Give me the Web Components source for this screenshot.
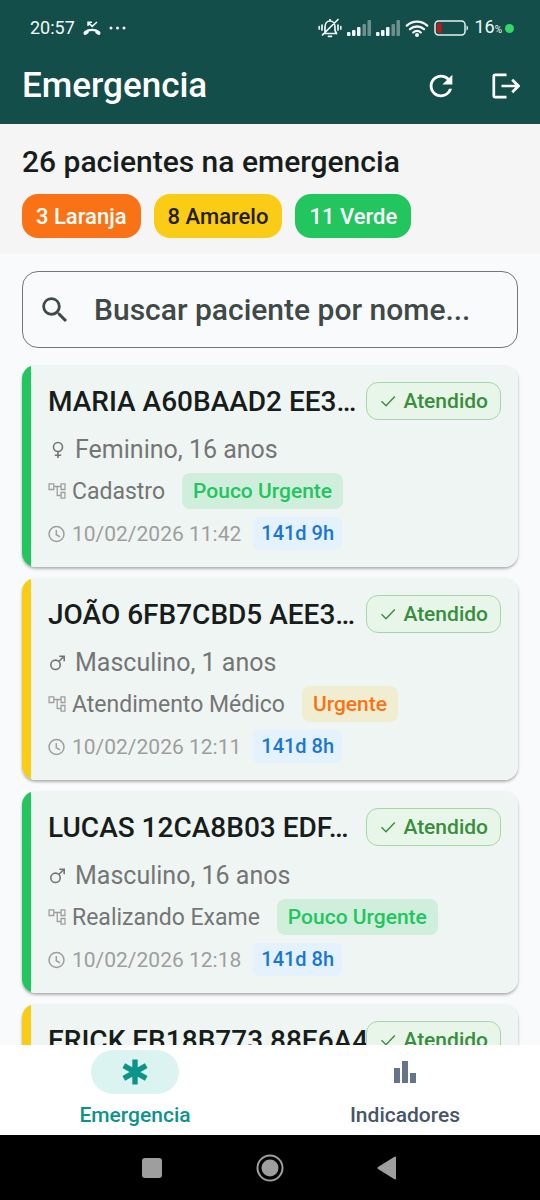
<!DOCTYPE html>
<html lang="pt-BR">
<head>
<meta charset="utf-8">
<meta name="viewport" content="width=device-width, initial-scale=1">
<title>Emergencia</title>
<style>
  html, body { margin: 0; height: 100%; }
  body { font-family: Roboto, "Liberation Sans", sans-serif; background: #f8fafc; color: #171d1b; }
</style>
</head>
<body>
<emergency-app></emergency-app>

<script>
const define = (name, html, setup) => {
  const template = document.createElement('template');
  template.innerHTML = html;
  customElements.define(name, class extends HTMLElement {
    constructor() {
      super();
      this.attachShadow({ mode: 'open' }).append(template.content.cloneNode(true));
    }
    connectedCallback() { if (setup) setup(this, this.shadowRoot); }
  });
};

/* Icons: [viewBox, width, height, markup] */
const ICONS = {
  missed: ['0 0 18 15', 18, 15, '<path d="M1 13.5c-.8-1-.6-2.4.4-3.200C5.500 7 12.500 7 16.600 10.300c1 .8 1.200 2.200.4 3.200-.5.6-1.300.7-2 .3l-2-1.200c-.5-.3-.7-.7-.7-1.300v-.9c-2-.7-4.600-.7-6.600 0v.9c0 .6-.2 1-.7 1.300l-2 1.200c-.7.4-1.500.3-2-.3z" fill="currentColor"/><path d="M5 5V1.200h4M5.200 1.400l4 4L14 1" fill="none" stroke="currentColor" stroke-width="1.500"/>'],
  more: ['0 0 17 4', 17, 4, '<g fill="currentColor"><circle cx="2" cy="2" r="1.500"/><circle cx="8.500" cy="2" r="1.500"/><circle cx="15" cy="2" r="1.500"/></g>'],
  bell: ['0 0 24 20', 24, 20, '<g fill="none" stroke="currentColor" stroke-width="1.700" stroke-linecap="round"><path d="M5.500 15.500h13M7 15V9c0-3.500 2-6 5-6s5 2.500 5 6v3.500l1.500 3M12 1.500V3M10.500 18.300h3M20 1.500L4.500 17M4 7v5M1.200 8.500v2.500M20 7v5M22.800 8.500v2.500"/></g>'],
  signal: ['0 0 24 16', 24, 16, '<g fill="currentColor"><rect x="0" y="12" width="3.500" height="4" rx="1"/><rect x="5" y="10" width="3.500" height="6" rx="1"/><rect x="10" y="7" width="3.500" height="9" rx="1"/><g opacity=".4"><rect x="15.500" y="4" width="3.500" height="12" rx="1"/><rect x="20.500" y="0" width="3.500" height="16" rx="1"/></g></g>'],
  wifi: ['0 0 24 17', 24, 17, '<g fill="none" stroke="currentColor" stroke-width="2.300" stroke-linecap="round"><path d="M1.800 5.600C7.500.2 16.500.2 22.200 5.600M5 9.200c4-3.600 10-3.600 14 0M8.200 12.500c2.200-2 5.400-2 7.600 0"/></g><circle cx="12" cy="15" r="2" fill="currentColor"/>'],
  battery: ['0 0 35 16', 35, 16, '<rect x="1" y="1" width="30" height="14" rx="3.500" fill="none" stroke="#e4f1ef" stroke-width="1.500"/><path d="M32.500 5.500c2 .5 2 4.500 0 5z" fill="#e4f1ef"/><rect x="3" y="3" width="4.500" height="10" rx="1.500" fill="#c4161c"/>'],
  refresh: ['0 0 24 24', 34, 34, '<path fill="currentColor" d="M17.650 6.350A7.958 7.958 0 0 0 12 4c-4.420 0-7.990 3.580-7.990 8s3.570 8 7.990 8c3.730 0 6.840-2.550 7.730-6h-2.080A5.990 5.990 0 0 1 12 18c-3.310 0-6-2.690-6-6s2.690-6 6-6c1.660 0 3.140.690 4.220 1.780L13 11h7V4z"/>'],
  logout: ['0 0 28 26', 28, 26, '<path d="M14.500 1.800H3.200Q1.800 1.800 1.800 3.200V22.800Q1.800 24.200 3.200 24.200H14.500M9.500 13H26.500M20.200 6.800L26.500 13 20.200 19.200" fill="none" stroke="currentColor" stroke-width="2.700"/>'],
  search: ['0 0 24 24', 34, 34, '<path fill="currentColor" d="M15.500 14h-.79l-.28-.27A6.471 6.471 0 0 0 16 9.500 6.500 6.500 0 1 0 9.500 16c1.610 0 3.090-.59 4.230-1.570l.27.28v.79l5 4.990L20.490 19l-4.990-5zm-6 0C7.010 14 5 11.990 5 9.500S7.010 5 9.500 5 14 7.010 14 9.500 11.990 14 9.500 14z"/>'],
  female: ['0 0 18 18', 18, 18, '<g fill="none" stroke="currentColor" stroke-width="1.600"><circle cx="10" cy="6" r="4.500"/><path d="M10 10.500V17M6.800 14.200h6.400"/></g>'],
  male: ['0 0 18 18', 18, 18, '<g fill="none" stroke="currentColor" stroke-width="1.600"><circle cx="7.500" cy="10.800" r="4.700"/><path d="M10.800 7.500L16 2.300M11.300 2.300H16.200V7.200"/></g>'],
  tree: ['2 1.500 20 21', 18, 18, '<path fill="currentColor" d="M22 11V3h-6v3H9V3H2v8h7V7.500h2.500V18H16v3h6v-8h-6v3.500h-3V7.500h3V11zM7.500 9.500h-4v-5h4zm10 5h3v5h-3zm0-10h3v5h-3z"/>'],
  clock: ['0 0 18 18', 18, 18, '<g fill="none" stroke="currentColor" stroke-width="1.500"><circle cx="8.500" cy="9" r="7.500"/><path d="M8.300 5v4.700l3.800 2.100"/></g>'],
  check: ['0 0 16 14', 16, 14, '<path d="M1.500 7.200L6 11.700 14.800 2.500" fill="none" stroke="currentColor" stroke-width="1.400"/>'],
  asterisk: ['0 0 26 26', 26, 26, '<path d="M13 .5V25.500M1.800 6.700L24.200 19.300M1.800 19.300L24.200 6.700" stroke="currentColor" stroke-width="5.400"/>'],
  bars: ['0 0 26 26', 26, 26, '<path d="M2 9h6v15H2zM10 2h6v22h-6zM18 14h6v10h-6z" fill="currentColor"/>'],
  square: ['0 0 28 28', 28, 28, '<rect x="4" y="4" width="20" height="20" rx="3" fill="currentColor"/>'],
  circle: ['0 0 28 28', 28, 28, '<circle cx="14" cy="14" r="12.500" fill="none" stroke="currentColor" stroke-width="2"/><circle cx="14" cy="14" r="8.500" fill="currentColor"/>'],
  triangle: ['0 0 28 28', 28, 28, '<path d="M22 3.500v21q0 1.500-1.500.7L4 15q-1.400-1 0-2L20.500 2.800q1.500-.8 1.500.7z" fill="currentColor"/>']
};

define('ui-icon', '<style>:host{display:inline-flex;flex:none}svg{display:block}</style><span></span>', (host, root) => {
  const [box, w, h, body] = ICONS[host.getAttribute('name')];
  root.querySelector('span').innerHTML = `<svg viewBox="${box}" width="${w}" height="${h}" aria-hidden="true">${body}</svg>`;
});

define('status-bar', `
<style>
  :host { display: flex; align-items: center; justify-content: space-between; height: 56px; padding: 0 26px 0 30px; background: #134e4a; color: #f1f8f7; font-size: 18px; line-height: 24px; box-sizing: border-box; }
  div { display: flex; align-items: center; gap: 8px; }
  .right { gap: 5px; }
  .level { display: flex; align-items: baseline; }
  small { font-size: 10px; }
  i { width: 9px; height: 9px; border-radius: 50%; background: #34d765; }
  .pair { gap: 3px; }
</style>
<div><span>20:57</span><ui-icon name="missed"></ui-icon><ui-icon name="more"></ui-icon></div>
<div class="right">
  <ui-icon name="bell"></ui-icon><ui-icon name="signal"></ui-icon><ui-icon name="signal"></ui-icon><ui-icon name="wifi"></ui-icon><ui-icon name="battery"></ui-icon>
  <div class="pair"><span class="level"><span>16</span><small>%</small></span><i></i></div>
</div>`);

define('app-header', `
<style>
  :host { display: flex; align-items: center; height: 68px; padding: 0 20px 8px 22px; background: #134e4a; color: #fff; box-sizing: border-box; }
  h1 { flex: 1; margin: 0; font-size: 35px; line-height: 44px; font-weight: 500; }
  .actions { display: flex; align-items: center; gap: 34px; }
  button { display: flex; padding: 0; border: 0; background: none; color: inherit; }
</style>
<h1><slot></slot></h1>
<div class="actions">
  <button type="button" aria-label="Atualizar"><ui-icon name="refresh"></ui-icon></button>
  <button type="button" aria-label="Sair"><ui-icon name="logout"></ui-icon></button>
</div>`);

define('triage-chip', `
<style>
  :host { display: block; padding: 9px 14px 7px; border-radius: 16px; background: #22c55e; color: #fff; font-size: 22px; line-height: 28px; font-weight: 500; white-space: nowrap; }
  :host([level="laranja"]) { background: #f97316; }
  :host([level="amarelo"]) { background: #facc15; color: #241d08; }
</style><slot></slot>`);

define('summary-panel', `
<style>
  :host { display: block; padding: 20px 22px 16px; background: #f5f5f5; }
  h2 { margin: 0 0 14px; font-size: 30px; line-height: 36px; font-weight: 500; white-space: nowrap; }
  div { display: flex; gap: 13px; }
</style>
<h2><slot name="title"></slot></h2><div><slot></slot></div>`);

define('search-field', `
<style>
  :host { display: block; padding: 17px 22px; }
  label { display: flex; align-items: center; gap: 22px; height: 77px; padding: 0 15px; box-sizing: border-box; border: 1px solid #6f7977; border-radius: 16px; color: #3f4947; }
  input { flex: 1; min-width: 0; padding: 0; border: 0; outline: 0; background: none; font: inherit; font-size: 30px; line-height: 40px; font-weight: 500; color: inherit; }
  input::placeholder { color: inherit; opacity: 1; }
</style>
<label><ui-icon name="search"></ui-icon><input type="text" aria-label="Buscar paciente por nome" placeholder="Buscar paciente por nome..."></label>`);

define('patient-card', `
<style>
  :host { display: block; --level: #22c55e; --tag: #22c55e; --tag-bg: #d0eedc; }
  :host([level="urgente"]) { --level: #facc15; --tag: #f97316; --tag-bg: #f1edd0; }
  article { display: flex; flex-direction: column; gap: 8px; padding: 17px 17px 17px 26px; border-radius: 14px; background: linear-gradient(90deg, var(--level) 9px, #eff5f3 9px); box-shadow: 0 2px 3px rgba(0,0,0,.26), 0 1px 2px rgba(0,0,0,.08); }
  .row { display: flex; align-items: center; white-space: nowrap; }
  .head { height: 38px; }
  h3 { flex: 1; min-width: 0; margin: 0; padding-top: 2px; font-size: 28px; line-height: 36px; font-weight: 500; }
  .state { display: flex; align-items: center; gap: 7px; padding: 0 12px 0 13px; height: 36px; border: 1px solid #a5d6a7; border-radius: 12px; background: #e8f5e9; color: #388e3c; font-size: 21px; font-weight: 500; }
  .person { height: 32px; padding-top: 6px; margin-bottom: -1px; gap: 9px; color: #757575; font-size: 25px; line-height: 32px; }
  .step { height: 36px; gap: 6px; color: #757575; font-size: 23px; }
  .date { height: 33px; gap: 6px; color: #9e9e9e; font-size: 21px; }
  .tag { margin-left: 11px; padding: 0 11px; border-radius: 8px; background: var(--tag-bg); color: var(--tag); font-size: 21px; line-height: 36px; font-weight: 500; }
  .step > ui-icon { color: #9e9e9e; }
  .wait { margin-left: 6px; padding: 0 8px; border-radius: 6px; background: #e3f2fd; color: #1976d2; font-size: 20px; line-height: 33px; font-weight: 500; }
</style>
<article>
  <div class="row head"><h3><slot name="name"></slot></h3><span class="state"><ui-icon name="check"></ui-icon><span>Atendido</span></span></div>
  <div class="row person"><slot name="sex"></slot><span><slot name="person"></slot></span></div>
  <div class="row step"><ui-icon name="tree"></ui-icon><span><slot name="step"></slot></span><span class="tag"><slot name="tag"></slot></span></div>
  <div class="row date"><ui-icon name="clock"></ui-icon><time><slot name="date"></slot></time><span class="wait"><slot name="wait"></slot></span></div>
</article>`);

const PATIENTS = [
  ['pouco', 'MARIA A60BAAD2 EE3…', 'female', 'Feminino, 16 anos', 'Cadastro', 'Pouco Urgente', '10/02/2026 11:42', '141d 9h'],
  ['urgente', 'JOÃO 6FB7CBD5 AEE3…', 'male', 'Masculino, 1 anos', 'Atendimento Médico', 'Urgente', '10/02/2026 12:11', '141d 8h'],
  ['pouco', 'LUCAS 12CA8B03 EDF…', 'male', 'Masculino, 16 anos', 'Realizando Exame', 'Pouco Urgente', '10/02/2026 12:18', '141d 8h'],
  ['urgente', 'ERICK EB18B773 88E6A4', 'male', '', '', '', '', '']
];

define('patient-list', `
<style>
  :host { display: block; padding: 0 22px; }
  ul { display: flex; flex-direction: column; gap: 11px; margin: 0; padding: 0; list-style: none; }
</style><ul></ul>`, (host, root) => {
  root.querySelector('ul').innerHTML = PATIENTS.map(([level, name, sex, person, step, tag, date, wait]) => `
    <li><patient-card level="${level}">
      <span slot="name">${name}</span><ui-icon slot="sex" name="${sex}"></ui-icon><span slot="person">${person}</span>
      <span slot="step">${step}</span><span slot="tag">${tag}</span><span slot="date">${date}</span><span slot="wait">${wait}</span>
    </patient-card></li>`).join('');
});

define('nav-item', `
<style>
  :host { display: block; flex: 1; }
  a { display: flex; flex-direction: column; align-items: center; gap: 7px; padding: 5px 0 6px; color: #475569; text-decoration: none; font-size: 21px; line-height: 28px; font-weight: 500; }
  .pill { display: flex; align-items: center; justify-content: center; width: 88px; height: 44px; border-radius: 22px; color: #64748b; }
  :host([active]) a, :host([active]) .pill { color: #0d9488; }
  :host([active]) .pill { background: #dbf3f1; }
</style>
<a href="#"><span class="pill"><slot name="icon"></slot></span><span><slot></slot></span></a>`);

define('bottom-nav', '<style>:host{display:block;background:#fff}nav{display:flex}</style><nav><slot></slot></nav>');

define('system-nav', `
<style>
  :host { display: flex; align-items: center; justify-content: center; gap: 90px; height: 65px; background: #000; color: #9e9e9e; }
  button { display: flex; padding: 0; border: 0; background: none; color: inherit; }
</style>
<button type="button" aria-label="Recentes"><ui-icon name="square"></ui-icon></button>
<button type="button" aria-label="Início"><ui-icon name="circle"></ui-icon></button>
<button type="button" aria-label="Voltar"><ui-icon name="triangle"></ui-icon></button>`);

define('emergency-app', `
<style>
  :host { display: flex; flex-direction: column; height: 100vh; }
  main { flex: 1; min-height: 0; overflow: hidden; }
  status-bar, app-header, bottom-nav, system-nav { flex: none; }
</style>
<status-bar></status-bar>
<app-header>Emergencia</app-header>
<main>
  <summary-panel>
    <span slot="title">26 pacientes na emergencia</span>
    <triage-chip level="laranja">3 Laranja</triage-chip>
    <triage-chip level="amarelo">8 Amarelo</triage-chip>
    <triage-chip level="verde">11 Verde</triage-chip>
  </summary-panel>
  <search-field></search-field>
  <patient-list></patient-list>
</main>
<bottom-nav>
  <nav-item active><ui-icon slot="icon" name="asterisk"></ui-icon>Emergencia</nav-item>
  <nav-item><ui-icon slot="icon" name="bars"></ui-icon>Indicadores</nav-item>
</bottom-nav>
<system-nav></system-nav>`);
</script>
</body>
</html>
